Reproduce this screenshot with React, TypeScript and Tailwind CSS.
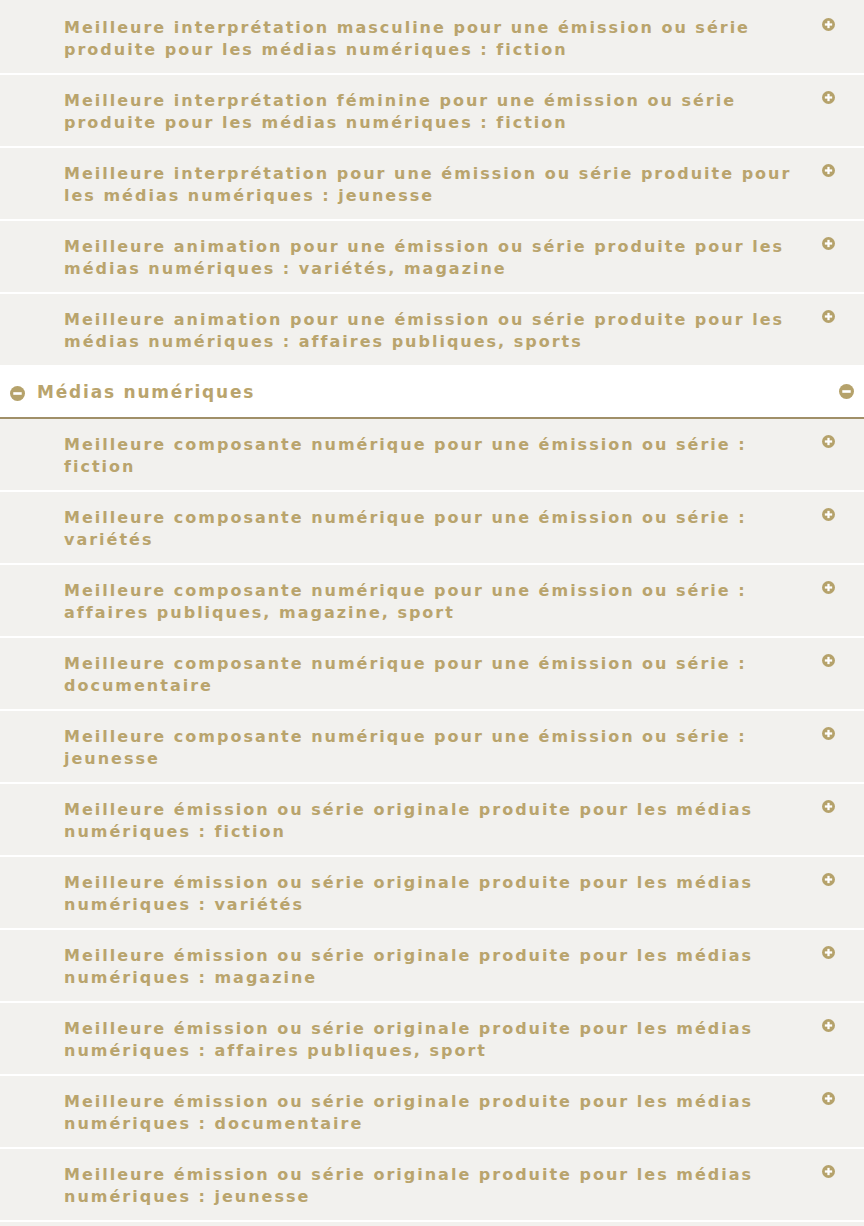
const topItems = [
  "Meilleure interprétation masculine pour une émission ou série produite pour les médias numériques : fiction",
  "Meilleure interprétation féminine pour une émission ou série produite pour les médias numériques : fiction",
  "Meilleure interprétation pour une émission ou série produite pour les médias numériques : jeunesse",
  "Meilleure animation pour une émission ou série produite pour les médias numériques : variétés, magazine",
  "Meilleure animation pour une émission ou série produite pour les médias numériques : affaires publiques, sports",
];

const numItems = [
  "Meilleure composante numérique pour une émission ou série : fiction",
  "Meilleure composante numérique pour une émission ou série : variétés",
  "Meilleure composante numérique pour une émission ou série : affaires publiques, magazine, sport",
  "Meilleure composante numérique pour une émission ou série : documentaire",
  "Meilleure composante numérique pour une émission ou série : jeunesse",
  "Meilleure émission ou série originale produite pour les médias numériques : fiction",
  "Meilleure émission ou série originale produite pour les médias numériques : variétés",
  "Meilleure émission ou série originale produite pour les médias numériques : magazine",
  "Meilleure émission ou série originale produite pour les médias numériques : affaires publiques, sport",
  "Meilleure émission ou série originale produite pour les médias numériques : documentaire",
  "Meilleure émission ou série originale produite pour les médias numériques : jeunesse",
];

function CircleIcon({ minus = false, size = 13 }: { minus?: boolean; size?: number }) {
  return (
    <svg width={size} height={size} viewBox="0 0 16 16" className="shrink-0">
      <circle cx="8" cy="8" r="8" fill="#b5a26b" />
      <rect x="3.5" y="6.6" width="9" height="2.8" fill="#fff" />
      {!minus && <rect x="6.6" y="3.5" width="2.8" height="9" fill="#fff" />}
    </svg>
  );
}

function Row({ label, first = false }: { label: string; first?: boolean }) {
  return (
    <div
      className={
        first
          ? "flex items-start bg-[#f2f1ee] border-b-2 border-white pl-16 pr-[29px] pt-[17px] pb-[12px]"
          : "flex items-start bg-[#f2f1ee] border-b-2 border-white pl-16 pr-[29px] pt-[15px] pb-[12px]"
      }
    >
      <p className="flex-1 pr-[18px] text-[16px] leading-[22px] font-bold tracking-[2px] text-[#b9a46d]">
        {label}
      </p>
      <div className="pt-[1px]">
        <CircleIcon />
      </div>
    </div>
  );
}

export default function App() {
  return (
    <div className="w-[864px] min-h-[1226px] bg-[#f2f1ee] font-['DejaVu_Sans',sans-serif]">
      {topItems.map((t, i) => (
        <Row key={t} label={t} first={i === 0} />
      ))}
      <div className="flex items-center h-[52px] bg-white border-b-2 border-[#a08f68] pl-[10px] pr-[10px] pt-[2px]">
        <CircleIcon minus size={15} />
        <span className="ml-3 flex-1 text-[17px] font-bold tracking-[1.8px] text-[#b9a46d]">Médias numériques</span>
        <div className="-mt-[4px]">
          <CircleIcon minus size={15} />
        </div>
      </div>
      {numItems.map((t) => (
        <Row key={t} label={t} />
      ))}
    </div>
  );
}
